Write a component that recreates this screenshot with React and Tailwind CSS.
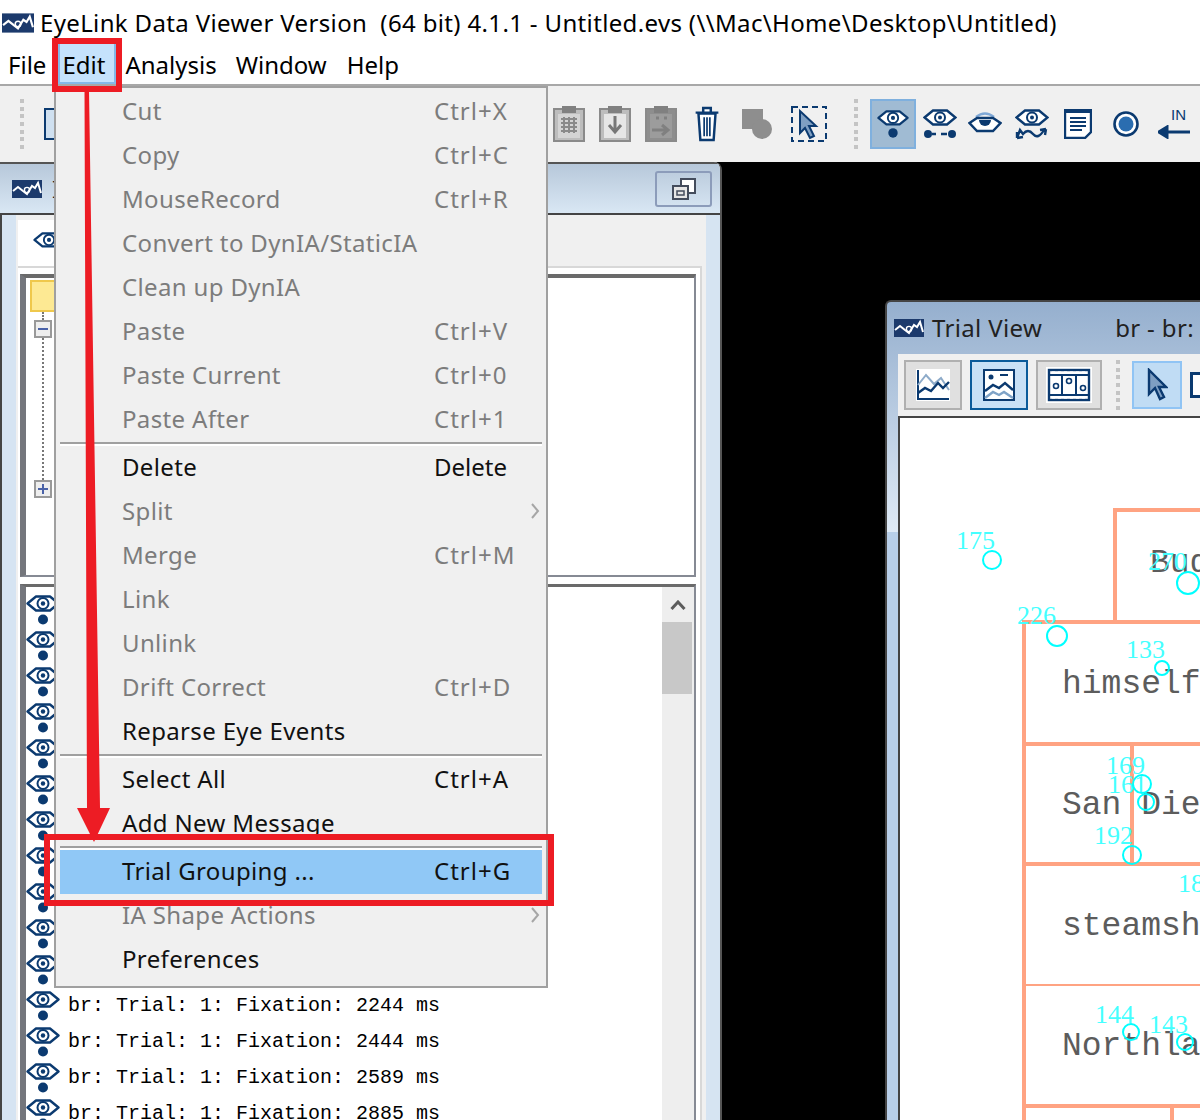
import React from 'react';

const NAVY = '#0b3a70';

const menuRows = [
  { label: 'Cut', keys: 'Ctrl+X', off: true },
  { label: 'Copy', keys: 'Ctrl+C', off: true },
  { label: 'MouseRecord', keys: 'Ctrl+R', off: true },
  { label: 'Convert to DynIA/StaticIA', off: true },
  { label: 'Clean up DynIA', off: true },
  { label: 'Paste', keys: 'Ctrl+V', off: true },
  { label: 'Paste Current', keys: 'Ctrl+0', off: true },
  { label: 'Paste After', keys: 'Ctrl+1', off: true },
  { sep: true },
  { label: 'Delete', keys: 'Delete' },
  { label: 'Split', off: true, more: true },
  { label: 'Merge', keys: 'Ctrl+M', off: true },
  { label: 'Link', off: true },
  { label: 'Unlink', off: true },
  { label: 'Drift Correct', keys: 'Ctrl+D', off: true },
  { label: 'Reparse Eye Events' },
  { sep: true },
  { label: 'Select All', keys: 'Ctrl+A' },
  { label: 'Add New Message' },
  { sep: true },
  { label: 'Trial Grouping ...', keys: 'Ctrl+G', active: true },
  { label: 'IA Shape Actions', off: true, more: true },
  { label: 'Preferences' },
];

// rows under the open menu only show their eye
const fixations = [null, null, null, null, null, null, null, null, null, null, null, '2244', '2444', '2589', '2885'];

const numbers = [
  ['175', 56, 110],
  ['270', 248, 131],
  ['226', 117, 185],
  ['133', 226, 219],
  ['169', 206, 335],
  ['161', 208, 354],
  ['192', 194, 405],
  ['18', 278, 453],
  ['144', 195, 584],
  ['143', 249, 594],
];

const words = [
  ['Bud', 250, 126],
  ['himself', 162, 247],
  ['San Die', 162, 368],
  ['steamsh', 162, 489],
  ['Northla', 162, 609],
];

function Logo({ className }) {
  return (
    <svg viewBox="0 0 30 18" className={className}>
      <rect width="30" height="18" fill="#1c3a6c" />
      <path d="M1 11l5-4 5 4 4 3 5-8 3 2 3-5 3 10" fill="none" stroke="#fff" strokeWidth="2" />
      <circle cx="15" cy="10" r="2.600" fill="none" stroke="#fff" strokeWidth="1.400" />
    </svg>
  );
}

function Eye({ className, dot = true }) {
  return (
    <svg viewBox="0 0 34 32" className={className}>
      <path d="M1.500 9.500L10 2.500h14l8.500 7-8.500 7H10z" fill="#fff" stroke={NAVY} strokeWidth="2.400" strokeLinejoin="round" />
      <circle cx="17" cy="9.500" r="5.500" fill="none" stroke={NAVY} strokeWidth="2" />
      <circle cx="17" cy="9.500" r="2.200" fill={NAVY} />
      {dot && <circle cx="17" cy="25.500" r="5" fill={NAVY} />}
    </svg>
  );
}

function Grip({ className }) {
  return (
    <div className={`flex flex-col justify-between shrink-0 w-[4px] h-[50px] ${className || ''}`}>
      {[0, 1, 2, 3, 4, 5, 6].map(i => (
        <span key={i} className="block w-[4px] h-[4px] bg-[#c4c4c4]" />
      ))}
    </div>
  );
}

function Clipboard({ kind }) {
  return (
    <svg viewBox="0 0 32 36" className="w-[32px] h-[36px] shrink-0">
      <rect x="1" y="3" width="30" height="32" fill={kind === 'arrow' ? '#8e8e8e' : '#bdbdbd'} stroke="#8a8a8a" strokeWidth="2" />
      <rect x="9" y="0" width="14" height="7" fill="#808080" />
      <rect x="5" y="8" width="22" height="24" fill={kind === 'copy' ? '#e6e6e6' : kind === 'arrow' ? '#9c9c9c' : '#d4d4d4'} />
      {kind === 'lines' && <path d="M8 13h16M8 17h16M8 21h16M8 25h16M11 11v16M16 11v16M21 11v16" stroke="#8a8a8a" strokeWidth="2" />}
      {kind === 'copy' && <path d="M16 10v14M10 19l6 7 6-7" fill="none" stroke="#777" strokeWidth="3" />}
      {kind === 'arrow' && <path d="M7 24h15M17 19l6 5-6 5M11 12h3M19 12h3" fill="none" stroke="#808080" strokeWidth="3" />}
    </svg>
  );
}

function ToolIcons() {
  return (
    <>
      <Grip />
      <svg viewBox="0 0 20 32" className="w-[20px] h-[32px] ml-[20px] shrink-0">
        <rect x="1" y="1" width="18" height="30" fill="#cfe0f0" stroke={NAVY} strokeWidth="2" />
      </svg>
      <div className="ml-[489px] flex items-center shrink-0">
        <Clipboard kind="lines" />
        <div className="ml-[14px]"><Clipboard kind="copy" /></div>
        <div className="ml-[14px]"><Clipboard kind="arrow" /></div>
        <svg viewBox="0 0 28 38" className="ml-[16px] w-[28px] h-[36px]">
          <path d="M2 7h24M10 6V2h8v4M5 8l2 28h14l2-28z" fill="#fff" stroke={NAVY} strokeWidth="2.600" />
          <path d="M11 12v20M14 12v20M17 12v20" stroke={NAVY} strokeWidth="1.800" />
        </svg>
        <svg viewBox="0 0 32 30" className="ml-[21px] w-[32px] h-[30px]">
          <rect x="0" y="0" width="21" height="20" fill="#8e8e8e" />
          <circle cx="20" cy="20" r="10" fill="#8e8e8e" />
        </svg>
        <svg viewBox="0 0 36 36" className="ml-[17px] w-[36px] h-[36px]">
          <rect x="1" y="1" width="34" height="34" fill="none" stroke={NAVY} strokeWidth="2" strokeDasharray="6 4" />
          <path d="M9 5v22l5-5 5 10 4-2-5-10h7z" fill="#7f9fc2" stroke={NAVY} strokeWidth="2" />
        </svg>
        <Grip className="ml-[27px]" />
        <div className="ml-[12px] w-[46px] h-[50px] flex items-center justify-center bg-[#a0bbd3] border-2 border-[#7fb0de]">
          <Eye className="w-[32px] h-[32px]" />
        </div>
        <svg viewBox="0 0 34 32" className="ml-[7px] w-[34px] h-[32px]">
          <path d="M1.500 9.500L10 2.500h14l8.500 7-8.500 7H10z" fill="#fff" stroke={NAVY} strokeWidth="2.400" />
          <circle cx="17" cy="9.500" r="5" fill="none" stroke={NAVY} strokeWidth="2" />
          <circle cx="17" cy="9.500" r="2" fill={NAVY} />
          <circle cx="5" cy="26" r="4" fill={NAVY} />
          <circle cx="29" cy="26" r="4" fill={NAVY} />
          <path d="M9 26h4M18 26h6" stroke={NAVY} strokeWidth="2.400" />
        </svg>
        <svg viewBox="0 0 34 24" className="ml-[11px] w-[34px] h-[24px]">
          <path d="M8 5Q17-2 26 5" fill="none" stroke="#7fa8d6" strokeWidth="2.400" />
          <path d="M1.500 11L9 6h16l7.500 5L25 19H9z" fill="#fff" stroke={NAVY} strokeWidth="2.400" />
          <path d="M11 8h12a6 6 0 0 1-12 0z" fill={NAVY} />
        </svg>
        <svg viewBox="0 0 34 32" className="ml-[13px] w-[34px] h-[32px]">
          <path d="M1.500 9.500L10 2.500h14l8.500 7-8.500 7H10z" fill="#fff" stroke={NAVY} strokeWidth="2.400" />
          <circle cx="17" cy="9.500" r="5" fill="none" stroke={NAVY} strokeWidth="2" />
          <circle cx="17" cy="9.500" r="2" fill={NAVY} />
          <path d="M2 30l3-8 3 4q5-6 10 0t11-4M31 21l-6 1M31 21l-1 6M2 30l6-1M2 30v-6" fill="none" stroke={NAVY} strokeWidth="2.400" />
        </svg>
        <svg viewBox="0 0 28 30" className="ml-[15px] w-[28px] h-[30px]">
          <path d="M1 1h26v22l-6 6H1z" fill="#fff" stroke={NAVY} strokeWidth="2.400" />
          <rect x="1" y="1" width="26" height="3" fill={NAVY} />
          <path d="M6 9h16M6 13h16M6 17h16M6 21h12" stroke={NAVY} strokeWidth="2" />
        </svg>
        <svg viewBox="0 0 26 28" className="ml-[21px] w-[26px] h-[28px]">
          <circle cx="13" cy="14" r="11.500" fill="#fff" stroke={NAVY} strokeWidth="2.600" />
          <circle cx="13" cy="14" r="7.500" fill="#2a6db0" />
        </svg>
        <div className="ml-[17px] w-[34px] h-[34px] flex flex-col items-end">
          <span className="text-[15px] leading-[16px] text-[#0b3a70] tracking-normal font-['Liberation_Sans',sans-serif] pr-[4px]">IN</span>
          <svg viewBox="0 0 32 14" className="w-[32px] h-[14px] mt-[2px]">
            <path d="M32 7H8M9 2L1 7l8 5z" fill={NAVY} stroke={NAVY} strokeWidth="3" />
          </svg>
        </div>
      </div>
    </>
  );
}

function TreeBox() {
  return (
    <div className="h-[303px] shrink-0 border-t-[4px] border-t-[#6a6a6a] border-l-[6px] border-l-[#74767c] border-r-2 border-b-2 border-r-[#868a94] border-b-[#868a94] ml-[2px] bg-white pt-[2px]">
      <div className="ml-[3px] w-[28px] flex flex-col items-center">
        <div className="w-[26px] h-[32px] bg-[#fde993] border-2 border-[#efc84c]" />
        <div className="h-[8px] border-l-2 border-dotted border-[#777]" />
        <div className="w-[18px] h-[18px] bg-[#eee] border-2 border-[#999] flex items-center justify-center">
          <span className="block w-[10px] h-[2px] bg-[#4a62a8]" />
        </div>
        <div className="h-[142px] border-l-2 border-dotted border-[#777]" />
        <div className="w-[18px] h-[18px] bg-[#eee] border-2 border-[#999] relative flex items-center justify-center">
          <span className="block w-[10px] h-[2px] bg-[#4a62a8]" />
          <span className="absolute block w-[2px] h-[10px] bg-[#4a62a8]" />
        </div>
      </div>
    </div>
  );
}

function FixationList() {
  return (
    <div className="flex-1 mt-[7px] ml-[2px] border-t-[3px] border-t-[#6a6a6a] border-l-[6px] border-l-[#74767c] border-r-2 border-r-[#868a94] bg-white flex min-h-0 overflow-hidden">
      <div className="flex-1 overflow-hidden">
        {fixations.map((ms, i) => (
          <div key={i} className="h-[36px] flex items-start">
            <Eye className="w-[34px] h-[32px] mt-[7px] shrink-0" />
            {ms && (
              <span className="ml-[8px] mt-[11px] text-[20px] leading-[24px] text-black tracking-normal font-['Liberation_Mono',monospace] whitespace-pre">
                {`br: Trial: 1: Fixation: ${ms} ms`}
              </span>
            )}
          </div>
        ))}
      </div>
      <div className="w-[32px] bg-[#eeeeee] shrink-0">
        <div className="h-[35px] flex items-center justify-center">
          <svg viewBox="0 0 16 10" className="w-[16px] h-[10px]">
            <path d="M1.500 9L8 2l6.500 7" fill="none" stroke="#5c5c5c" strokeWidth="3" />
          </svg>
        </div>
        <div className="w-[30px] h-[72px] bg-[#c8c8c8]" />
      </div>
    </div>
  );
}

function LeftWindow() {
  return (
    <div className="absolute left-0 top-0 bottom-0 w-[722px] flex flex-col bg-[#f0f0f0] border-r-2 border-[#555] rounded-tr-[8px] overflow-hidden">
      <div className="h-[53px] shrink-0 flex items-center pl-[12px] pr-[8px] border-b-2 border-[#444] border-t-2 border-t-[#555] bg-[linear-gradient(to_bottom,#b7c8da,#d9e7f4)]">
        <Logo className="w-[30px] h-[18px]" />
        <span className="ml-[10px] text-[24px] text-[#1a1a1a]">Inspector</span>
        <div className="ml-auto w-[57px] h-[36px] border-2 border-[#8c9cba] rounded-[3px] flex items-center justify-center">
          <svg viewBox="0 0 24 22" className="w-[24px] h-[22px]">
            <rect x="9" y="1" width="14" height="14" fill="#fff" stroke="#444c5c" strokeWidth="2" />
            <rect x="1" y="8" width="15" height="13" fill="#e6e6e6" stroke="#444c5c" strokeWidth="2" />
            <rect x="5" y="13" width="7" height="4" fill="none" stroke="#444c5c" strokeWidth="1.500" />
          </svg>
        </div>
      </div>
      <div className="flex-1 flex min-h-0">
        <div className="w-[16px] bg-[#d6e4f2] border-l-2 border-[#444] shrink-0" />
        <div className="flex-1 flex flex-col min-h-0 pl-[2px] pr-[4px]">
          <div className="h-[51px] shrink-0 pt-[5px]">
            <div className="w-[200px] h-[46px] bg-white flex items-center pl-[15px] pt-[6px]">
              <Eye className="w-[32px] h-[30px]" dot={false} />
            </div>
          </div>
          <div className="flex-1 flex flex-col min-h-0 bg-white border-t-2 border-r-2 border-[#d8d8d8] pt-[6px] pr-[4px]">
            <TreeBox />
            <FixationList />
          </div>
        </div>
        <div className="w-[14px] bg-[#d6e4f2] shrink-0" />
      </div>
    </div>
  );
}

function TrialToolbar() {
  return (
    <div className="h-[62px] shrink-0 bg-[#f0f0f0] flex items-center pl-[6px]">
      <div className="w-[58px] h-[50px] bg-[#e0e0e0] border-2 border-[#b0b0b0] flex items-center justify-center">
        <svg viewBox="0 0 34 32" className="w-[34px] h-[32px] bg-white">
          <path d="M2 1v29h31" fill="none" stroke={NAVY} strokeWidth="2" />
          <path d="M2 16l8-10 8 9 7-6 8 12" fill="none" stroke="#8eabc9" strokeWidth="2" />
          <path d="M2 24l7-5 6 3 7-8 5 5 6-6" fill="none" stroke={NAVY} strokeWidth="2.400" />
        </svg>
      </div>
      <div className="ml-[8px] w-[58px] h-[50px] bg-[#c8e0f6] border-2 border-[#0a5a9a] flex items-center justify-center">
        <svg viewBox="0 0 32 32" className="w-[32px] h-[32px]">
          <rect x="1" y="1" width="30" height="30" fill="#fff" stroke={NAVY} strokeWidth="2" />
          <circle cx="8" cy="8" r="2.500" fill={NAVY} />
          <path d="M17 6h8" stroke={NAVY} strokeWidth="2" />
          <path d="M2 22l8-6 6 3 6-5 8 7" fill="none" stroke={NAVY} strokeWidth="2.400" />
          <path d="M2 29l8-6 6 3 5-3 9 6" fill="none" stroke="#7fa3c7" strokeWidth="2.400" />
        </svg>
      </div>
      <div className="ml-[8px] w-[66px] h-[50px] bg-[#e0e0e0] border-2 border-[#b0b0b0] flex items-center justify-center">
        <svg viewBox="0 0 46 36" className="w-[46px] h-[36px] bg-white">
          <rect x="3" y="3" width="40" height="30" fill="none" stroke={NAVY} strokeWidth="2.400" />
          <path d="M3 8h40M3 28h40M16 8v20M30 8v20" stroke={NAVY} strokeWidth="2" />
          <path d="M6 5.500h34M6 30.500h34" stroke="#fff" strokeWidth="2" strokeDasharray="3 3" />
          <circle cx="10" cy="19" r="2.500" fill="none" stroke={NAVY} strokeWidth="1.600" />
          <circle cx="23" cy="14" r="2.500" fill="none" stroke={NAVY} strokeWidth="1.600" />
          <circle cx="37" cy="21" r="2.500" fill="none" stroke={NAVY} strokeWidth="1.600" />
        </svg>
      </div>
      <Grip className="ml-[14px]" />
      <div className="ml-[12px] w-[50px] h-[48px] bg-[#c0dcf4] border-2 border-[#90c4f4] flex items-center justify-center">
        <svg viewBox="0 0 22 34" className="w-[22px] h-[34px]">
          <path d="M3 2v24l6-6 5 11 4-2-5-10h7z" fill="#7f9fc2" stroke={NAVY} strokeWidth="2.400" />
        </svg>
      </div>
      <div className="ml-[8px] w-[30px] h-[26px] border-[3px] border-[#0b3a70] bg-white shrink-0" />
    </div>
  );
}

function TrialCanvas() {
  return (
    <div className="flex-1 relative bg-white border-t-2 border-l-2 border-[#444] overflow-hidden tracking-normal">
      <svg className="absolute left-0 top-0 w-[300px] h-[702px]">
        <g fill="#ffa382">
          <rect x="213" y="90" width="87" height="4" />
          <rect x="213" y="90" width="4" height="112" />
          <rect x="122" y="202" width="178" height="4" />
          <rect x="122" y="202" width="4" height="500" />
          <rect x="122" y="324" width="178" height="4" />
          <rect x="230" y="328" width="4" height="118" />
          <rect x="122" y="444" width="178" height="4" />
          <rect x="122" y="566" width="178" height="2" />
          <rect x="122" y="686" width="178" height="4" />
          <rect x="270" y="690" width="4" height="12" />
        </g>
      </svg>
      {words.map(([text, left, top]) => (
        <span
          key={text}
          className="absolute text-[33px] leading-[40px] text-[#5c5c5c] whitespace-pre font-['Liberation_Mono',monospace]"
          style={{ left, top }}
        >
          {text}
        </span>
      ))}
      {numbers.map(([text, left, top]) => (
        <span
          key={text}
          className="absolute text-[26px] leading-[26px] text-[#44ffff] font-['Liberation_Serif',serif]"
          style={{ left, top }}
        >
          {text}
        </span>
      ))}
      <svg className="absolute left-0 top-0 w-[300px] h-[702px]">
        <g fill="none" stroke="#00ffff" strokeWidth="2">
          <circle cx="92" cy="142" r="9" />
          <circle cx="288" cy="165" r="11" />
          <circle cx="157" cy="218" r="10" />
          <circle cx="262" cy="250" r="7" />
          <circle cx="242" cy="366" r="9" />
          <circle cx="246" cy="384" r="8" />
          <circle cx="232" cy="437" r="9" />
          <circle cx="231" cy="614" r="8" />
          <circle cx="285" cy="624" r="8" />
        </g>
      </svg>
    </div>
  );
}

function TrialWindow() {
  return (
    <div className="absolute left-[885px] top-[138px] w-[400px] bottom-0 flex flex-col border-l-2 border-t-2 border-[#444] rounded-tl-[6px] overflow-hidden bg-[linear-gradient(to_bottom,#95afce_0,#dfeaf6_230px,#b8cfe9_230px)]">
      <div className="h-[52px] shrink-0 flex items-center pl-[7px]">
        <Logo className="w-[30px] h-[18px]" />
        <span className="ml-[8px] text-[24px] text-[#222]">Trial View</span>
        <span className="ml-[73px] text-[24px] text-[#222] whitespace-pre">br - br:</span>
      </div>
      <div className="flex-1 flex flex-col min-h-0 ml-[11px]">
        <TrialToolbar />
        <TrialCanvas />
      </div>
    </div>
  );
}

function EditMenu() {
  return (
    <div className="absolute left-[54px] top-[86px] w-[494px] h-[902px] bg-[#f0f0f0] border-2 border-[#a0a0a0] p-[4px] pt-[2px] text-[24px] leading-[44px]">
      {menuRows.map((row, i) =>
        row.sep ? (
          <div key={i} className="h-[4px] flex flex-col justify-center">
            <div className="h-[2px] bg-[#a0a0a0]" />
            <div className="h-[2px] bg-white" />
          </div>
        ) : (
          <div key={i} className={`h-[44px] pb-[2px] flex items-center relative whitespace-pre ${row.active ? 'bg-[#90c8f6]' : ''} ${row.off ? 'text-[#7c7c7c]' : 'text-[#111]'}`}>
            <span className="absolute left-[62px]">{row.label}</span>
            {row.keys && (
              <span className={`absolute left-[374px] ${row.keys.startsWith('Ctrl') ? 'tracking-[1px]' : 'tracking-normal'}`}>
                {row.keys}
              </span>
            )}
            {row.more && (
              <svg viewBox="0 0 10 16" className="absolute right-[2px] w-[10px] h-[16px]">
                <path d="M2 1l6 7-6 7" fill="none" stroke="#a6a6a6" strokeWidth="2" />
              </svg>
            )}
          </div>
        )
      )}
    </div>
  );
}

function Annotations() {
  return (
    <>
      <svg className="absolute left-0 top-0 w-[200px] h-[860px]">
        <polygon points="84.500,90 89,90 100,808 110,808 94,842 77,808 87,808" fill="#ed1c24" />
      </svg>
      <div className="absolute left-[52px] top-[38px] w-[70px] h-[54px] border-[6px] border-[#ed1c24]" />
      <div className="absolute left-[44px] top-[834px] w-[510px] h-[72px] border-[6px] border-[#ed1c24]" />
    </>
  );
}

export default function App() {
  return (
    <div className="relative w-[1200px] h-[1120px] overflow-hidden bg-white flex flex-col tracking-[0.35px] font-['Noto_Sans',sans-serif]">
      <div className="h-[42px] shrink-0 flex items-center pl-[2px] pt-[4px]">
        <Logo className="w-[32px] h-[20px]" />
        <span className="ml-[6px] text-[24px] text-black whitespace-pre">
          {'EyeLink Data Viewer Version  (64 bit) 4.1.1 - Untitled.evs (\\\\Mac\\Home\\Desktop\\Untitled)'}
        </span>
      </div>
      <div className="h-[42px] shrink-0 flex items-stretch text-[24px] text-black tracking-normal pl-[8px]">
        <span className="flex items-center pt-[4px]">File</span>
        <span className="ml-[12px] w-[58px] pl-[2px] pt-[4px] flex items-center bg-[#c5e2fc] border-2 border-[#84b8e8]">Edit</span>
        <span className="ml-[9px] flex items-center pt-[4px]">Analysis</span>
        <span className="ml-[19px] flex items-center pt-[4px]">Window</span>
        <span className="ml-[20px] flex items-center pt-[4px]">Help</span>
      </div>
      <div className="h-[78px] shrink-0 bg-[#f0f0f0] border-t-2 border-[#a8a8a8] flex items-center pl-[20px]">
        <ToolIcons />
      </div>
      <div className="flex-1 relative bg-black">
        <LeftWindow />
        <TrialWindow />
      </div>
      <EditMenu />
      <Annotations />
    </div>
  );
}
